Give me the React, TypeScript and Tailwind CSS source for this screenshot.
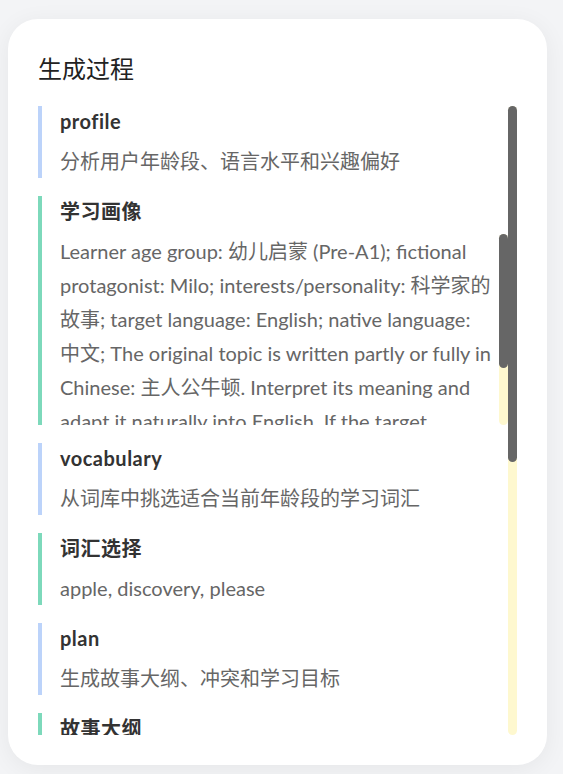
import React from 'react';

type Step = {
  key: string;
  title: string;
  detail: React.ReactNode;
  kind: 'step' | 'result';
  scroll?: boolean;
};

const steps: Step[] = [
  { key: 'profile', title: 'profile', detail: '分析用户年龄段、语言水平和兴趣偏好', kind: 'step' },
  {
    key: 'portrait',
    title: '学习画像',
    detail: (
      <>
        Learner age group: 幼儿启蒙 (Pre-A1); fictional protagonist: Milo; interests/personality: 科学家的故事;
        target language: English; native language: <span className="whitespace-nowrap">中文;</span> The original
        topic is written partly or fully in Chinese: 主人公牛顿. Interpret its meaning and adapt it naturally into
        English. If the target language differs, keep every sentence short and simple for young learners.
      </>
    ),
    kind: 'result',
    scroll: true,
  },
  { key: 'vocabulary', title: 'vocabulary', detail: '从词库中挑选适合当前年龄段的学习词汇', kind: 'step' },
  { key: 'words', title: '词汇选择', detail: 'apple, discovery, please', kind: 'result' },
  { key: 'plan', title: 'plan', detail: '生成故事大纲、冲突和学习目标', kind: 'step' },
  {
    key: 'outline',
    title: '故事大纲',
    detail:
      'Milo sits under an apple tree. An apple falls on his head. He asks why it falls and makes a small discovery.',
    kind: 'result',
  },
  { key: 'story', title: 'story', detail: '根据大纲撰写分级故事正文', kind: 'step' },
];

// headless screenshots drop native scrollbars, so the bars are drawn by hand
function Bar({ thumb }: { thumb: string }) {
  return (
    <div className="w-[9px] shrink-0 rounded-full bg-[#fef8cf] flex flex-col">
      <div className={`${thumb} w-full rounded-full bg-[#666666]`} />
    </div>
  );
}

function StepItem({ step }: { step: Step }) {
  return (
    <div
      className={`shrink-0 border-l-4 pl-[18px] ${
        step.kind === 'step' ? 'border-[#bcd3fa]' : 'border-[#7dd9bb]'
      }`}
    >
      <div className="text-[20px] leading-[30px] font-bold tracking-[0.5px] text-[#333333] mb-2">{step.title}</div>
      {step.scroll ? (
        <div className="flex h-[191px]">
          <div className="flex-1 min-w-0 overflow-hidden">
            <p className="text-[20px] leading-[34px] text-[#666666]">{step.detail}</p>
          </div>
          <Bar thumb="h-[134px]" />
        </div>
      ) : (
        <p className="text-[20px] leading-[34px] text-[#666666]">{step.detail}</p>
      )}
    </div>
  );
}

export default function App() {
  return (
    <div className="min-h-screen bg-[#f3f4f6] pt-[19px] pl-2 pb-[9px] font-['Lato','Noto_Sans_CJK_SC',sans-serif]">
      <div className="w-[539px] h-[746px] rounded-[30px] bg-white shadow-[0_4px_24px_rgba(0,0,0,0.06)] px-[30px] py-[30px] flex flex-col">
        <h2 className="text-[24px] leading-[40px] text-[#222222] mb-[17px]">生成过程</h2>
        <div className="flex-1 min-h-0 flex">
          <div className="flex-1 min-w-0 overflow-hidden flex flex-col gap-[18px]">
            {steps.map((s) => (
              <StepItem key={s.key} step={s} />
            ))}
          </div>
          <Bar thumb="h-[356px]" />
        </div>
      </div>
    </div>
  );
}
